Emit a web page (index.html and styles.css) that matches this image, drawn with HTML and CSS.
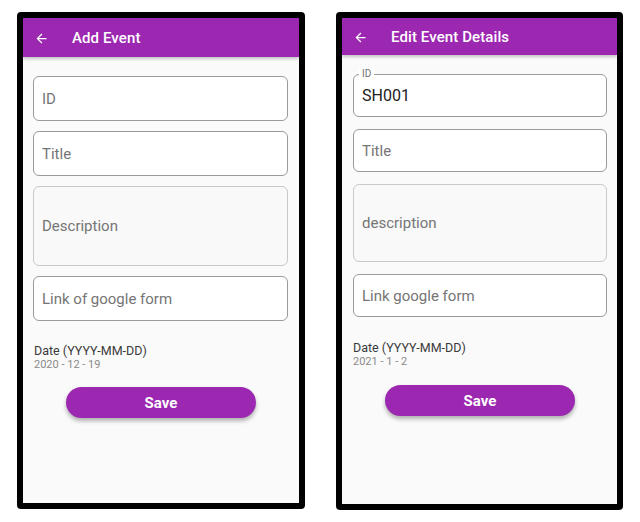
FILE: index.html
```html
<!DOCTYPE html>
<html>
<head>
<meta charset="utf-8">
<link rel="stylesheet" href="styles.css">
</head>
<body>
<div class="screens">
  <div class="phone">
    <div class="appbar">
      <svg class="back" viewBox="0 0 24 24" width="15" height="15"><path d="M20 11H7.83l5.59-5.59L12 4l-8 8 8 8 1.41-1.41L7.83 13H20v-2z" fill="#fff"/></svg>
      <span class="appbar-title">Add Event</span>
    </div>
    <div class="form">
      <div class="field">ID</div>
      <div class="field">Title</div>
      <div class="field field-multi">Description</div>
      <div class="field">Link of google form</div>
      <div class="date">
        <div class="date-label">Date (YYYY-MM-DD)</div>
        <div class="date-value">2020 - 12 - 19</div>
      </div>
      <div class="save-row"><button class="save">Save</button></div>
    </div>
  </div>

  <div class="phone phone-edit">
    <div class="appbar">
      <svg class="back" viewBox="0 0 24 24" width="15" height="15"><path d="M20 11H7.83l5.59-5.59L12 4l-8 8 8 8 1.41-1.41L7.83 13H20v-2z" fill="#fff"/></svg>
      <span class="appbar-title">Edit Event Details</span>
    </div>
    <div class="form">
      <div class="field field-filled"><span class="floating">ID</span>SH001</div>
      <div class="field">Title</div>
      <div class="field field-multi">description</div>
      <div class="field">Link google form</div>
      <div class="date">
        <div class="date-label">Date (YYYY-MM-DD)</div>
        <div class="date-value">2021 - 1 - 2</div>
      </div>
      <div class="save-row"><button class="save">Save</button></div>
    </div>
  </div>
</div>
</body>
</html>
```

FILE: styles.css
```css
* { box-sizing: border-box; }
html, body { margin: 0; padding: 0; background: #fff; }
body { font-family: Roboto, "Noto Sans", sans-serif; }

.screens {
  display: flex;
  gap: 31px;
  padding: 12px 0 0 17px;
}

.phone {
  width: 288px;
  height: 497px;
  border: 6px solid #000;
  border-radius: 4px;
  background: #fafafa;
  display: flex;
  flex-direction: column;
  overflow: hidden;
}
.phone-edit { width: 287px; height: 498px; }

.appbar {
  height: 39px;
  flex: none;
  background: #9c27b0;
  display: flex;
  align-items: center;
  padding-left: 11px;
  padding-top: 1px;
  box-shadow: 0 2px 3px rgba(0,0,0,0.22);
  position: relative;
  z-index: 1;
}
.phone-edit .appbar { height: 37px; }
.back { flex: none; display: block; }
.appbar-title {
  color: #fff;
  font-size: 15px;
  font-weight: 500;
  margin-left: 23px;
  letter-spacing: 0.1px;
}

.form {
  display: flex;
  flex-direction: column;
  padding: 19px 11px 0 10px;
  gap: 10px;
}
.phone-edit .form { gap: 12px; padding-top: 19px; padding-left: 11px; padding-right: 10px; }

.field {
  height: 45px;
  border: 1px solid #9a9a9a;
  border-radius: 6px;
  background: #fff;
  display: flex;
  align-items: center;
  padding-left: 8px;
  font-size: 15px;
  color: #757575;
  position: relative;
}
.phone-edit .field { height: 43px; }
.field-multi,
.phone-edit .field-multi {
  height: 80px;
  background: #f9f9f9;
  border-color: #c9c9c9;
}
.phone-edit .field-multi { height: 78px; }
.field:last-of-type { height: 44px; }
.phone-edit .field:last-of-type { height: 43px; }

.field-filled {
  color: #212121;
  font-size: 16px;
}
.floating {
  position: absolute;
  left: 5px;
  top: -7px;
  font-size: 10px;
  line-height: 12px;
  padding: 0 3px;
  background: #fff;
  color: #707070;
}

.date { padding-top: 12px; padding-left: 1px; }
.phone-edit .date { padding-top: 11px; padding-left: 0; }
.date-label {
  font-size: 12.5px;
  line-height: 15px;
  color: #3a3a3a;
}
.date-value {
  font-size: 11px;
  line-height: 13px;
  color: #8a8a8a;
}

.save-row {
  display: flex;
  justify-content: center;
  padding-top: 6px;
  padding-left: 1px;
}
.phone-edit .save-row { padding-top: 5px; padding-left: 0; }
.save {
  width: 190px;
  height: 31px;
  border: none;
  border-radius: 16px;
  background: #9c27b0;
  color: #fff;
  font-family: Roboto, sans-serif;
  font-size: 15px;
  font-weight: 700;
  box-shadow: 0 3px 4px rgba(0,0,0,0.3);
}
```
